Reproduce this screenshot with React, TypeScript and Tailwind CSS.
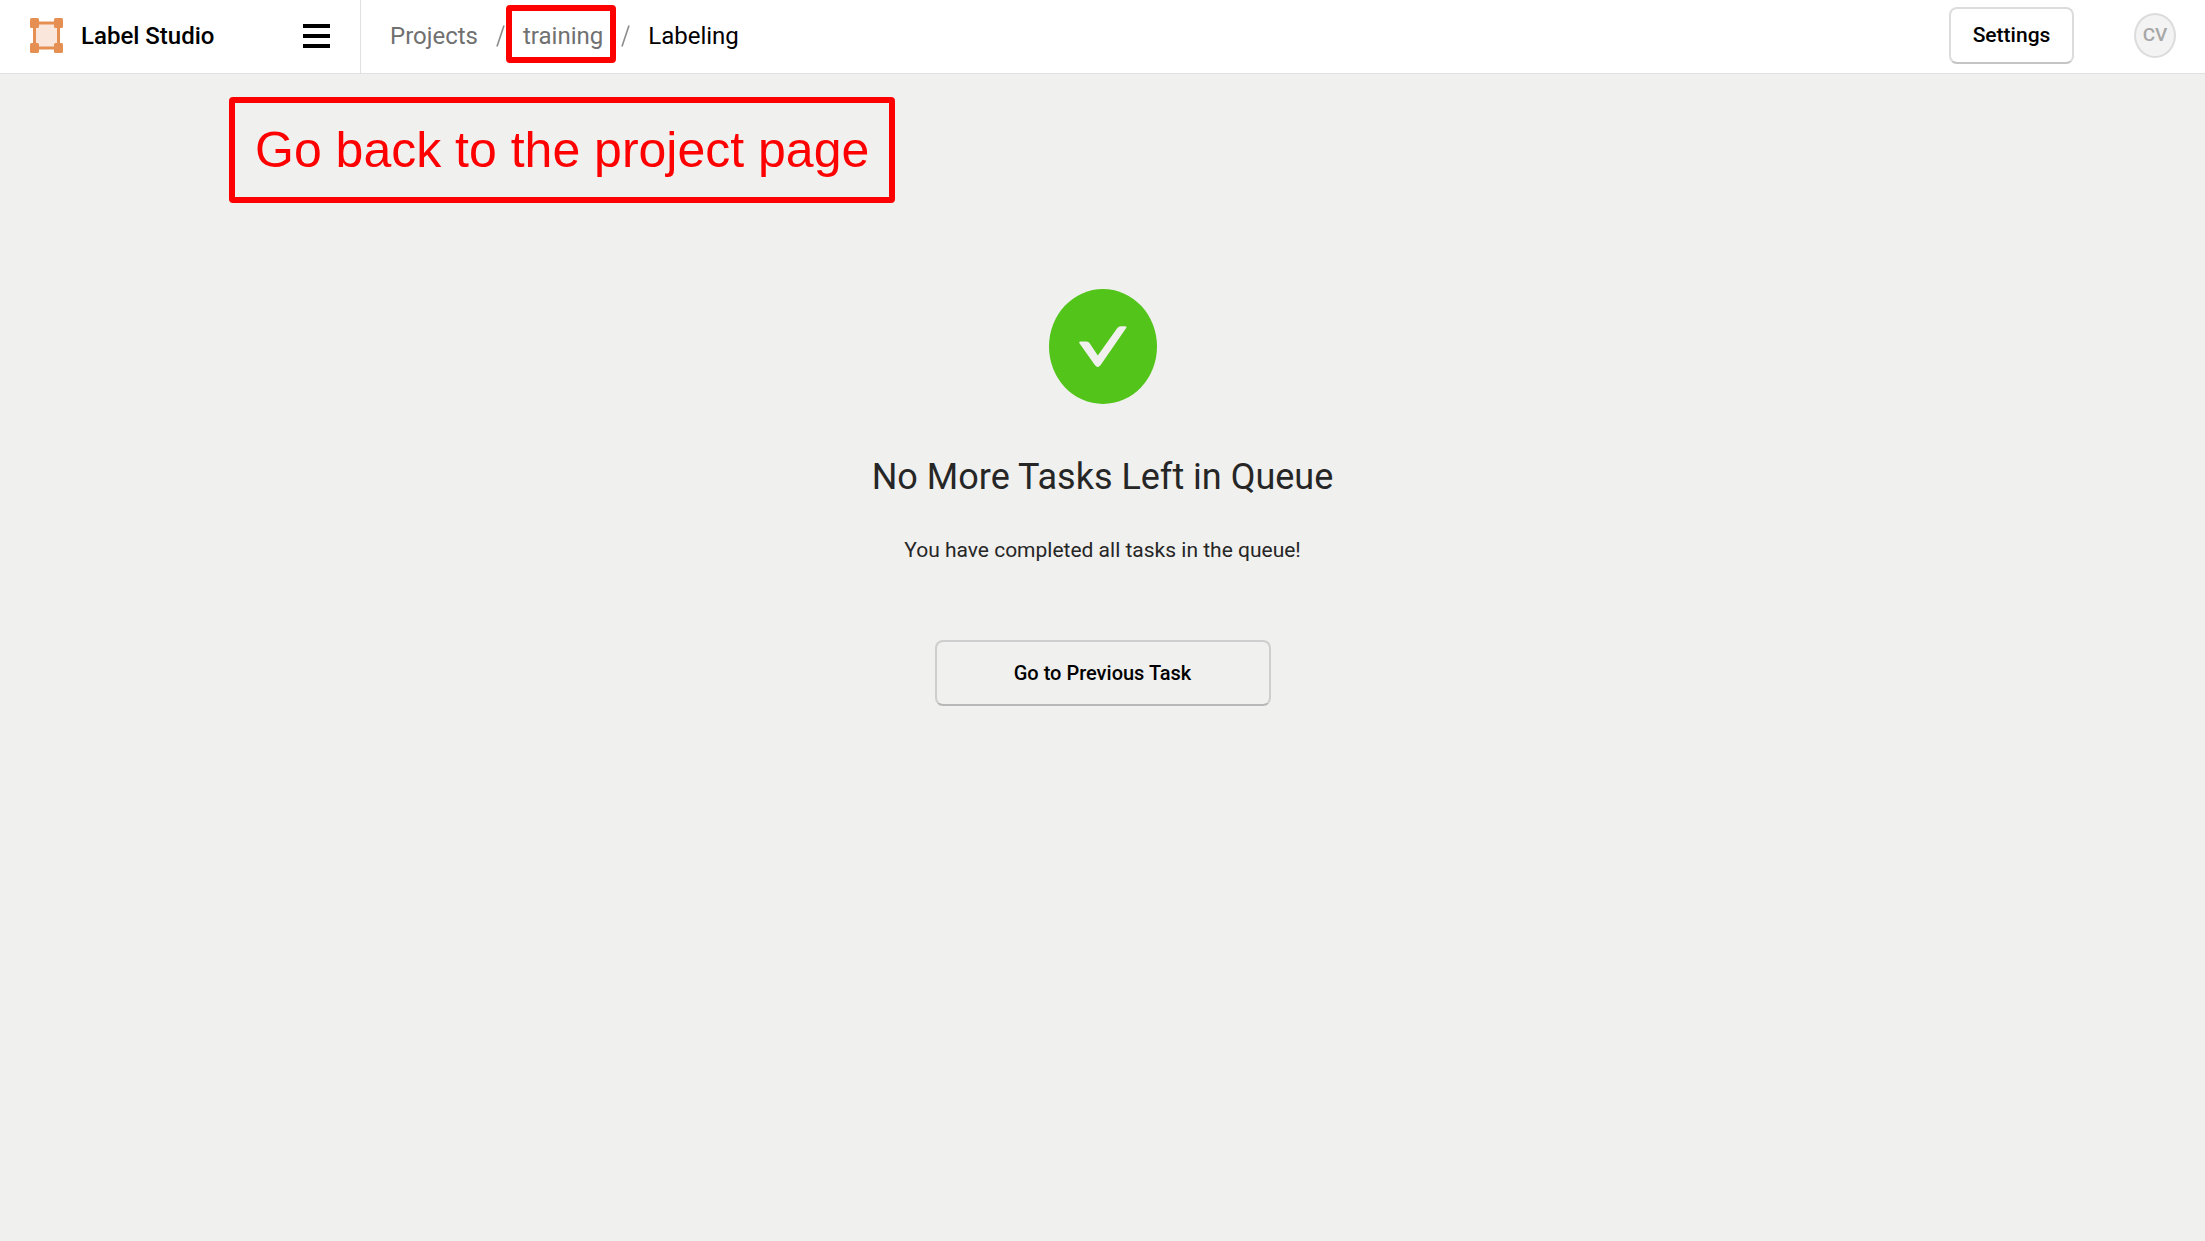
function Logo() {
  return (
    <svg viewBox="0 0 33 35" className="h-[35px] w-[33px]" aria-hidden="true">
      <rect x="4.5" y="5" width="24" height="25" fill="#fae6da" stroke="#e58f52" strokeWidth="3" />
      <g fill="#e58f52">
        <rect x="0" y="0" width="9" height="10" rx="1.5" />
        <rect x="24" y="0" width="9" height="10" rx="1.5" />
        <rect x="0" y="25" width="9" height="10" rx="1.5" />
        <rect x="24" y="25" width="9" height="10" rx="1.5" />
      </g>
    </svg>
  );
}

function SuccessMark() {
  return (
    <svg viewBox="0 0 108 115" className="h-[115px] w-[108px]" aria-hidden="true">
      <ellipse cx="54" cy="57.5" rx="54" ry="57.5" fill="#52c41a" />
      <path
        d="M31.5 52.5H37.5Q39.5 52.5 40.7 54.3L48.8 66.5L68 39.5Q69.5 37.3 72 37.3H76Q78.3 37.3 77 39.3L51.5 76.3Q48.7 79.6 46 76.3L30.6 54.5Q29.5 52.5 31.5 52.5Z"
        fill="#f0f0ee"
      />
    </svg>
  );
}

function Slash() {
  return (
    <svg viewBox="0 0 9 22" className="h-[22px] w-[9px]" aria-hidden="true">
      <path d="M8 0.5L1 21.5" stroke="#8c8c8c" strokeWidth="1.6" />
    </svg>
  );
}

function Header() {
  return (
    <header className="flex h-[74px] items-stretch border-b border-[#e0e0e0] bg-white">
      <div className="flex w-[361px] shrink-0 items-center justify-between border-r border-[#e0e0e0] pr-[30px] pb-[2px] pl-[30px]">
        <a href="#home" className="flex items-center gap-[18px] text-2xl font-medium text-black">
          <Logo />
          Label Studio
        </a>
        <button type="button" aria-label="Menu" className="flex w-[27px] flex-col gap-[6px]">
          <span className="h-1 bg-black" />
          <span className="h-1 bg-black" />
          <span className="h-1 bg-black" />
        </button>
      </div>
      <nav aria-label="Breadcrumb" className="flex items-center pb-[2px] pl-[29px]">
        <ol className="flex items-center gap-[18px] text-2xl leading-8 text-[#707070]">
          <li>
            <a href="#projects">Projects</a>
          </li>
          <li>
            <Slash />
          </li>
          <li className="relative">
            <a href="#training">training</a>
            <span className="pointer-events-none absolute -top-[15px] -right-[13px] -bottom-[11px] -left-[17px] rounded-[4px] border-6 border-[#ff0000]" />
          </li>
          <li>
            <Slash />
          </li>
          <li className="text-black" aria-current="page">
            Labeling
          </li>
        </ol>
      </nav>
      <div className="ml-auto flex items-center gap-[60px] pr-[29px] pb-[2px]">
        <button
          type="button"
          className="h-[57px] w-[125px] rounded-lg border-2 border-[#dcdcdc] border-b-[#c4c4c4] text-[21px] font-medium text-black"
        >
          Settings
        </button>
        <button
          type="button"
          className="flex h-[45px] w-[42px] items-center justify-center rounded-[50%] border-2 border-[#dcdcdc] bg-[#f3f3f3] text-[19px] font-medium text-[#a6a6a6]"
        >
          CV
        </button>
      </div>
    </header>
  );
}

export default function App() {
  return (
    <div className="flex min-h-screen flex-col bg-[#f0f0ee] font-['Roboto',sans-serif]">
      <Header />
      <main className="flex flex-col pt-[23px]">
        <p className="ml-[229px] self-start rounded-[4px] border-6 border-[#ff0000] px-5 py-[17px] font-['Liberation_Sans',sans-serif] text-[50px] leading-[60px] text-[#ff0000]">
          Go back to the project page
        </p>
        <section className="mt-[86px] flex flex-col items-center text-[#262626]">
          <SuccessMark />
          <h1 className="mt-[49px] text-4xl leading-[48px]">No More Tasks Left in Queue</h1>
          <p className="mt-[33px] text-[21px] leading-8">You have completed all tasks in the queue!</p>
          <button
            type="button"
            className="mt-[74px] h-[66px] w-[336px] rounded-lg border-2 border-[#cecece] border-b-[#b8b8b8] text-xl font-medium text-black"
          >
            Go to Previous Task
          </button>
        </section>
      </main>
    </div>
  );
}
